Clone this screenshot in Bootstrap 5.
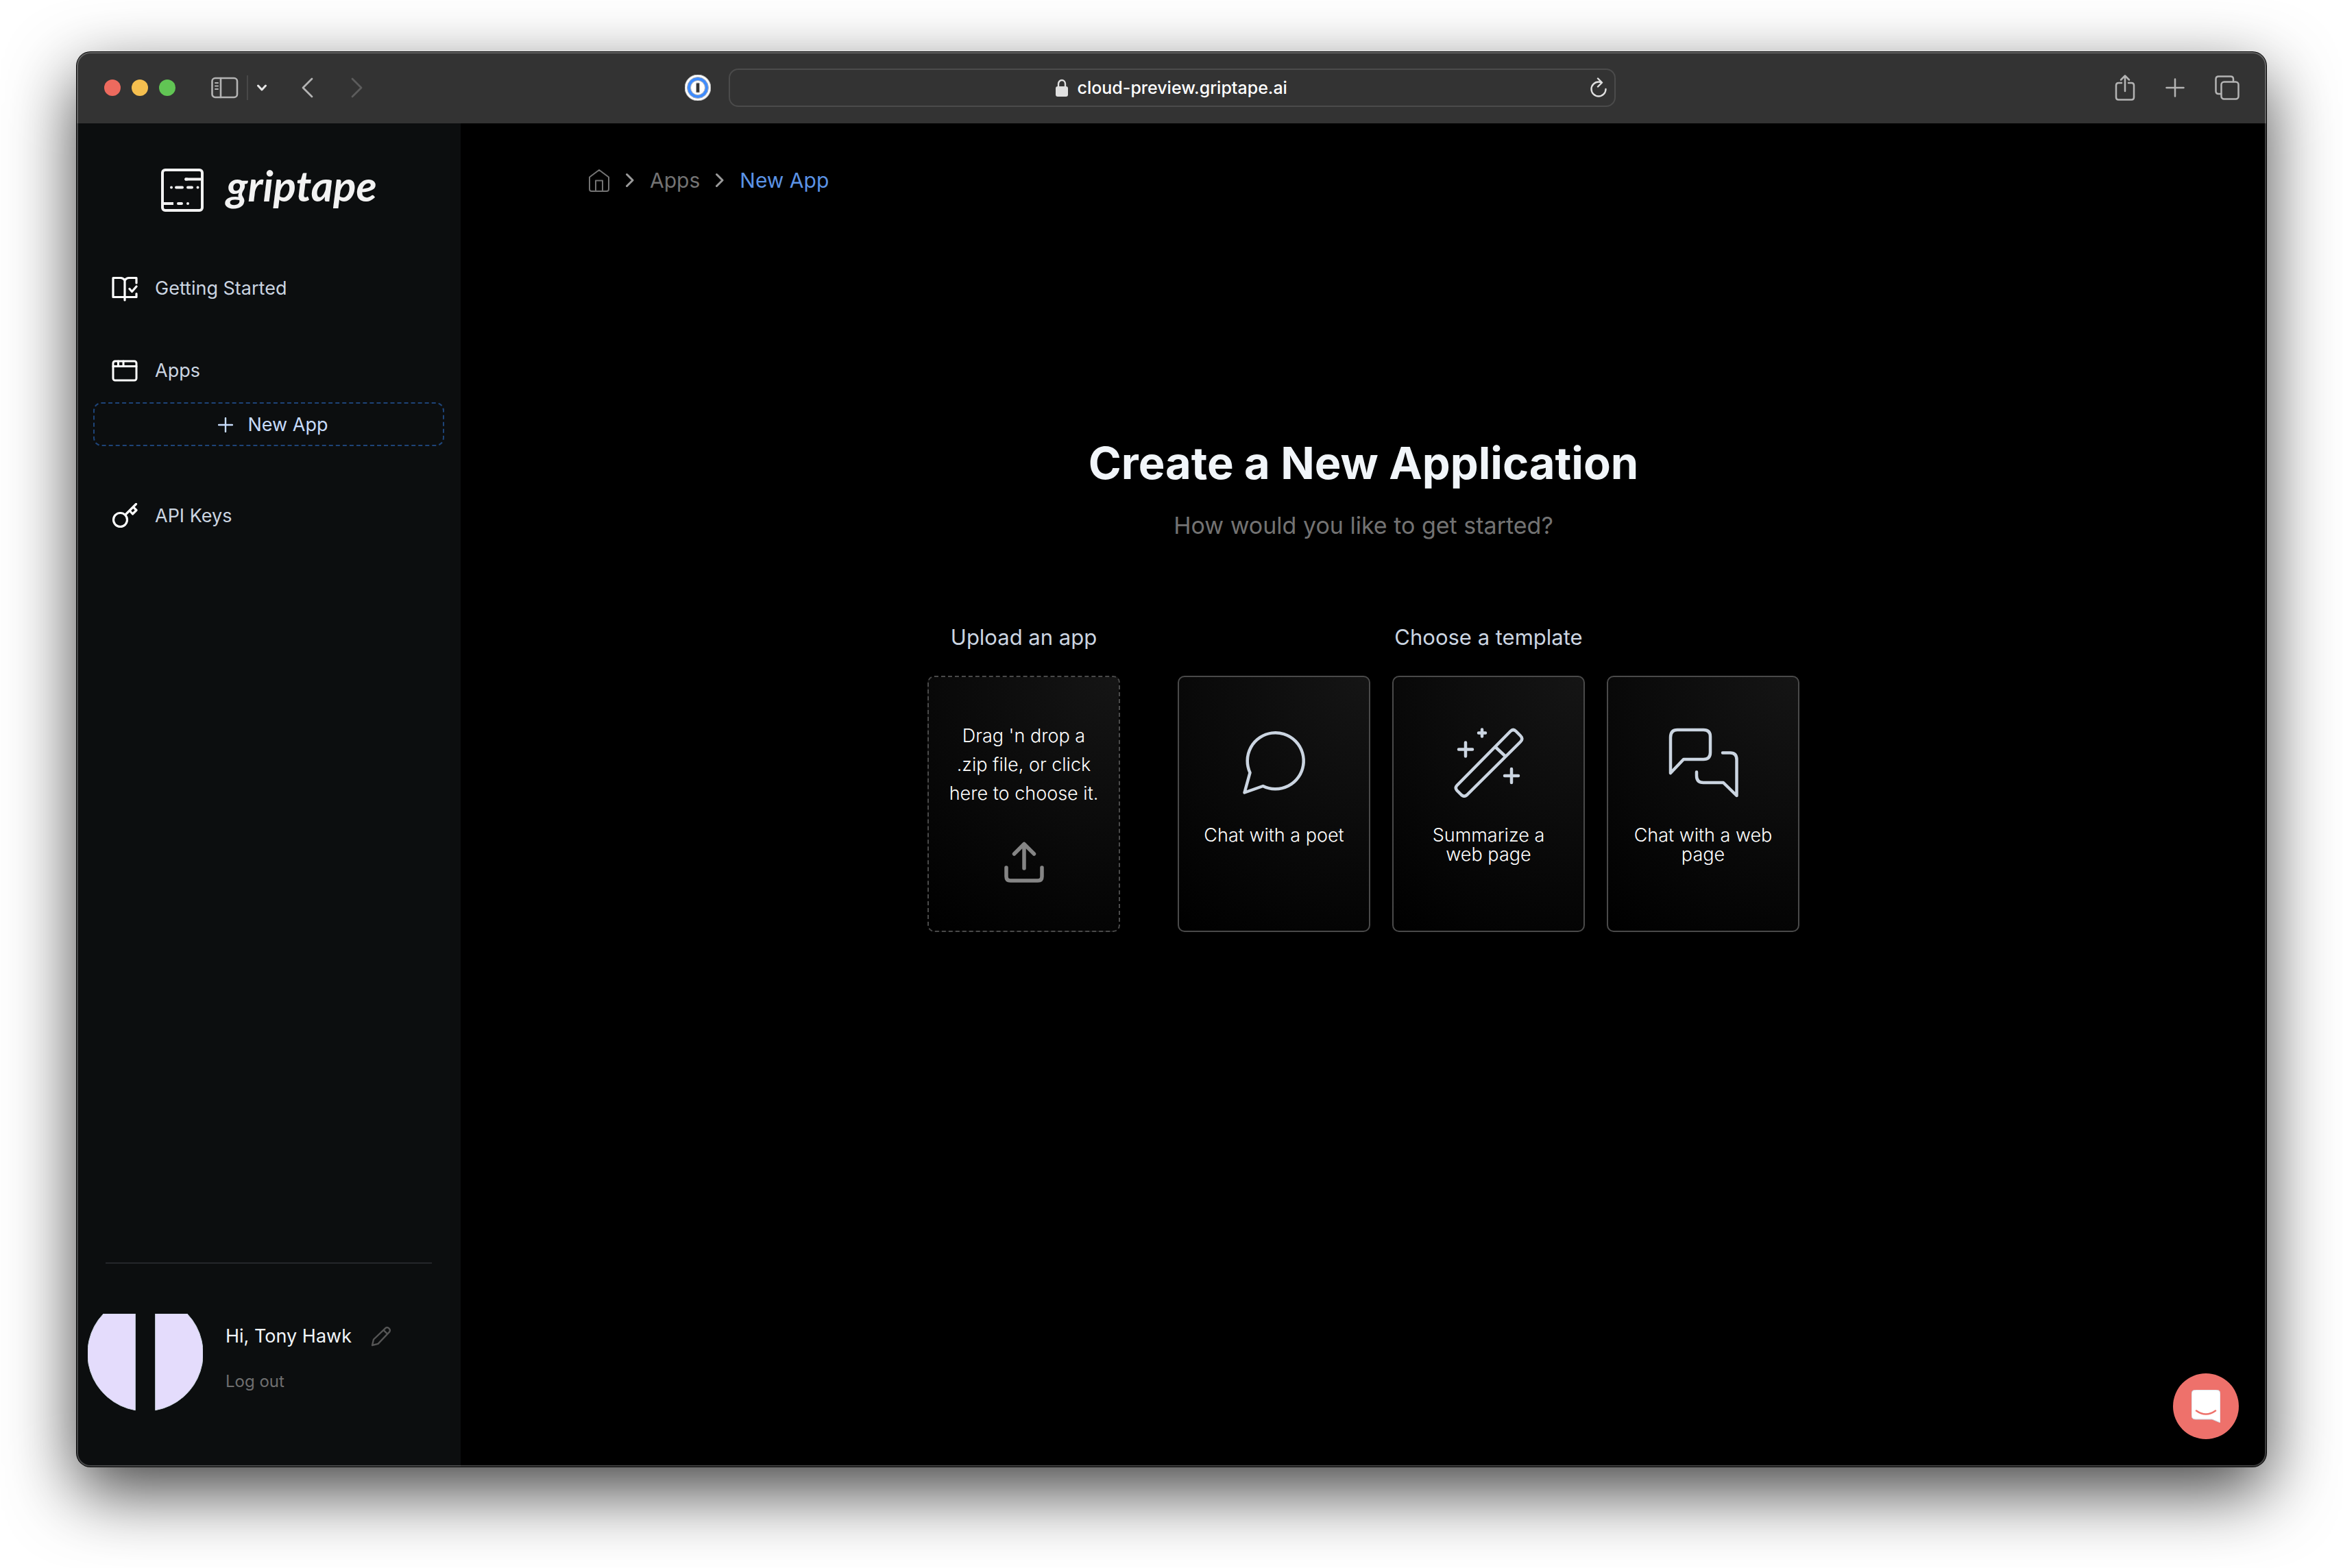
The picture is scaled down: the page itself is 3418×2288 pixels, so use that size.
<!DOCTYPE html>
<html lang="en">
<head>
<meta charset="utf-8">
<meta name="viewport" content="width=device-width, initial-scale=1">
<title>Create a New Application</title>
<link href="https://cdn.jsdelivr.net/npm/bootstrap@5.3.0/dist/css/bootstrap.min.css" rel="stylesheet">
<style>
body{background:#fff;font-family:Inter,"Liberation Sans",sans-serif;font-size:27px;line-height:40px;color:#cbd5e1;padding:76px 112px 148px}
svg{display:block;flex:none;fill:none;stroke:currentColor;stroke-linecap:round;stroke-linejoin:round}
a{color:inherit;text-decoration:none}
button{background:none;border:0;padding:0;color:inherit}
.browser{min-height:calc(100vh - 224px);border-radius:20px;background:#000;box-shadow:0 0 0 1px #000,0 36px 100px rgba(0,0,0,.74)}
.browser::after{content:"";position:absolute;inset:0;border-radius:20px;box-shadow:inset 0 0 0 2px rgba(255,255,255,.24);pointer-events:none}
.toolbar{height:104px;background:#333;border-radius:20px 20px 0 0;color:#b4b4b4;padding:0 39px 0 40px}
.side-group{flex:1 1 0;min-width:0}
.lights{gap:16px}
.light{width:24px;height:24px;border-radius:50%}
.light-close{background:#ed6a5e}
.light-min{background:#f5bf4f}
.light-max{background:#61c554}
.tools{gap:44px}
.vault{margin-right:26px}
.address{flex:0 1 1294px;height:56px;border:2px solid #4b4b4b;border-radius:14px;padding:0 11px;color:#e0e0e0}
.address input{width:308px;background:none;border:0;padding:0;color:#fff;font-size:25px;font-weight:500;line-height:40px;outline:0}
.address label{margin-right:14px}
.split{width:2px;height:36px;margin-left:12px;background:#484848}
.sidebar{flex:0 0 560px;background:#0c0e0f;padding:61px 24px 81px;border-bottom-left-radius:20px}
.logo{gap:32px;height:72px;margin-bottom:76px}
.logo svg{margin-top:3px}
.brand{font-family:Lato,"Open Sans",sans-serif;font-style:italic;font-weight:700;font-size:62px;line-height:58px;color:#f2f2f2}
.side-link{height:64px;padding-left:27px;gap:25px}
.side-link svg{color:#fff}
.new-app{height:64px;border:2px dashed #1e4478;border-radius:12px;color:#c7dcfb;gap:22px;margin:14px 0 70px;padding:2px 0 0 12px}
.rule{height:2px;background:#25272a;margin:0 18px}
.profile{gap:33px;margin:73px 0 0 -8px}
.profile-text{padding-top:13px}
.content{padding:63px 186px}
.crumbs{font-size:30px;color:#737373;gap:22px}
.crumbs .here{color:#5b93e6}
.headline{font-size:65px;line-height:80px;font-weight:700;color:#f1f5f9;margin:353px 0 27px}
.sub{font-size:34px;line-height:48px;color:#737373;margin-bottom:119px}
.group-title{font-size:31px;line-height:40px;font-weight:400;margin-bottom:36px}
.groups{gap:84px}
.picks{gap:32px}
.tile{width:281px;height:374px;border:2px solid #4a4a4a;border-radius:10px;background:radial-gradient(circle at 100% 0,#151515 0,#000 100%);color:#fff;font-size:27px;font-weight:300;line-height:28px}
.tile svg{color:#cbd5e1}
.tile-drop{border-style:dashed;line-height:42px;padding:65px 20px 0;gap:49px;cursor:pointer}
.tile-drop svg{color:#858585}
.tile-pick{padding:74px 16px 0;gap:41px}
.fab{right:40px;bottom:40px;width:96px;height:96px;border-radius:50%;background:#ee716b}
.quiet{font-size:24px;color:#6f6f6f;margin-top:26px}
</style>
<script src="https://cdn.jsdelivr.net/npm/bootstrap@5.3.0/dist/js/bootstrap.bundle.min.js"></script>
</head>
<body>
<div class="browser position-relative d-flex flex-column">
  <header class="toolbar d-flex align-items-center">
    <div class="side-group d-flex align-items-center">
      <div class="lights d-flex">
        <span class="light light-close"></span>
        <span class="light light-min"></span>
        <span class="light light-max"></span>
      </div>
      <button class="ms-5 ps-1" aria-label="Sidebar"><svg width="40" height="32" viewBox="0 0 40 32" stroke-width="2.6"><rect x="1.5" y="2" width="36.5" height="28" rx="4.5"/><path d="M14 2v28"/><path stroke-width="2" d="M6 9h4M6 13.500h4M6 18h4"/></svg></button>
      <span class="split"></span>
      <button class="ms-2 ps-1" aria-label="Tab groups"><svg width="16" height="10" viewBox="0 0 16 10" stroke-width="3" style="color:#e6e6e6"><path d="M2.500 2 8 8l5.500-6"/></svg></button>
      <button class="ms-5" aria-label="Back"><svg width="20" height="32" viewBox="0 0 20 32" stroke-width="2.800"><path d="M17 3 4 16l13 13"/></svg></button>
      <button class="ms-5 ps-1" aria-label="Forward" disabled><svg width="20" height="32" viewBox="0 0 20 32" stroke-width="2.800" style="color:#5c5c5c"><path d="M4 3l13 13L4 29"/></svg></button>
      <button class="vault ms-auto" aria-label="Password manager"><svg width="38" height="38" viewBox="0 0 38 38" stroke="none"><circle cx="19" cy="19" r="19" fill="#fff"/><circle cx="19" cy="19" r="15.500" fill="#3f8cff"/><circle cx="19" cy="19" r="10.500" fill="#fff"/><rect x="16.500" y="12" width="5" height="14" rx="1" fill="#333"/></svg></button>
    </div>
    <div class="address d-flex align-items-center">
      <span class="side-group"></span>
      <label for="url" aria-label="Address"><svg width="18" height="26" viewBox="0 0 18 26"><rect x="0" y="11" width="18" height="15" rx="3" fill="currentColor" stroke="none"/><path stroke-width="2.400" d="M4 12V7.500a5 5.500 0 0 1 10 0V12"/></svg></label>
      <input id="url" type="text" value="cloud-preview.griptape.ai">
      <span class="side-group d-flex justify-content-end"><button aria-label="Reload"><svg width="24" height="30" viewBox="0 0 24 30" stroke-width="2.400"><path d="M22.500 17a10.500 10.500 0 1 1-10.500-10.500c1.500 0 3 .2 4.300.8M11 1.500l6 6-6 6"/></svg></button></span>
    </div>
    <div class="side-group tools d-flex align-items-center justify-content-end">
      <button aria-label="Share"><svg width="30" height="40" viewBox="0 0 30 40" stroke-width="2.500"><path d="M10 13H5.500Q2 13 2 16.500v17.500q0 3.500 3.500 3.500h19q3.500 0 3.500-3.500V16.500q0-3.500-3.500-3.500H20M15 25V2.500M9 8.500l6-6 6 6"/></svg></button>
      <button aria-label="New tab"><svg width="28" height="28" viewBox="0 0 28 28" stroke-width="2.500"><path d="M14 1.500v25M1.500 14h25"/></svg></button>
      <button aria-label="Tab overview"><svg width="36" height="36" viewBox="0 0 36 36" stroke-width="2.500"><rect x="9.500" y="9.500" width="25" height="25" rx="4"/><path d="M9 27H5.500Q1.500 27 1.500 23V5.500Q1.500 1.500 5.500 1.500H23q4 0 4 4V9"/></svg></button>
    </div>
  </header>

  <div class="d-flex flex-fill">
    <aside class="sidebar d-flex flex-column">
      <a href="#" class="logo d-flex align-items-start justify-content-center">
        <svg width="64" height="66" viewBox="0 0 64 66" stroke-width="4" style="color:#f2f2f2"><rect x="3" y="4" width="58" height="59" rx="4"/><path stroke-linecap="butt" d="M36 17.500h25M5 53h14"/><path d="M37 17.500h2M16 29.500h0M23 29.500h9M40 29.500h6M54.500 29.500h0M17 53h0M26 53h5M40 53h0"/></svg>
        <span class="brand">griptape</span>
      </a>
      <nav class="d-flex flex-column">
        <a href="#" class="side-link d-flex align-items-center mb-5"><svg width="38" height="38" viewBox="0 0 38 38" stroke-width="3.200"><path d="M19 7q-2.500-3.500-6-3.500H2v28h34v-5M36 11V3.500H25Q21.500 3.500 19 7v29M26 19.500l3.500 4L36 16"/></svg>Getting Started</a>
        <a href="#" class="side-link d-flex align-items-center mt-2"><svg width="38" height="38" viewBox="0 0 38 38" stroke-width="3"><rect x="2" y="5" width="34" height="28" rx="3"/><path d="M2 12.500h34M9.500 5v7.500M17 5v7.500"/></svg>Apps</a>
        <button class="new-app d-flex align-items-center justify-content-center"><svg width="22" height="22" viewBox="0 0 22 22" stroke-width="2.400" stroke-linecap="butt"><path d="M11 1v20M1 11h20"/></svg>New App</button>
        <a href="#" class="side-link d-flex align-items-center"><svg width="38" height="38" viewBox="0 2 38 38" stroke-width="3.200"><circle cx="12.500" cy="26.500" r="10"/><path d="M20 19 35.500 3.500M26 13l4.500 5L36 12.500 31.500 8"/></svg>API Keys</a>
      </nav>
      <div class="mt-auto">
        <div class="rule"></div>
        <div class="profile d-flex">
          <svg width="168" height="142" viewBox="0 26 168 142" stroke="none"><path fill="#e4dcfc" d="M69 26H23A84 84 0 0 0 69 166.700ZM99 26h46A84 84 0 0 1 99 166.700Z"/></svg>
          <div class="profile-text">
            <div class="d-flex align-items-center gap-4" style="color:#f1f5f9">Hi, Tony Hawk<button class="ms-1" aria-label="Edit profile"><svg width="30" height="30" viewBox="0 0 30 30" stroke-width="2.400" style="color:#555"><path d="M2 28l2-8.500L21.500 2.800q2.600-1.800 5 .5t.7 5L10.500 25.800ZM18.500 5.800l5.700 5.700"/></svg></button></div>
            <a href="#" class="quiet d-inline-block">Log out</a>
          </div>
        </div>
      </div>
    </aside>

    <main class="content flex-fill">
      <nav class="crumbs d-flex align-items-center" aria-label="Breadcrumb">
        <a href="#" aria-label="Home"><svg width="32" height="34" viewBox="0 0 32 34" stroke-width="2"><path d="M2 12.500 16 2l14 10.500V30q0 3-3 3H5q-3 0-3-3ZM11 33V17.500h10V33"/></svg></a>
        <svg width="14" height="22" viewBox="0 0 14 22" stroke-width="3" style="color:#9a9a9a"><path d="M2.500 2.500 11 11l-8.500 8.500"/></svg>
        <a href="#">Apps</a>
        <svg width="14" height="22" viewBox="0 0 14 22" stroke-width="3" style="color:#9a9a9a"><path d="M2.500 2.500 11 11l-8.500 8.500"/></svg>
        <a href="#" class="here" aria-current="page">New App</a>
      </nav>
      <h1 class="headline text-center">Create a New Application</h1>
      <p class="sub text-center">How would you like to get started?</p>
      <div class="groups d-flex justify-content-center">
        <section>
          <h2 class="group-title text-center">Upload an app</h2>
          <label class="tile tile-drop d-flex flex-column align-items-center text-center">
            <input type="file" class="visually-hidden" accept=".zip">
            <span>Drag 'n drop a<br>.zip file, or click<br>here to choose it.</span>
            <svg width="58" height="60" viewBox="0 0 58 60" stroke-width="5.500"><path d="M3 38v13q0 6 6 6h40q6 0 6-6V38M29 39V4M14.500 18 29 3.500 43.500 18"/></svg>
          </label>
        </section>
        <section>
          <h2 class="group-title text-center">Choose a template</h2>
          <div class="picks d-flex">
            <button class="tile tile-pick d-flex flex-column align-items-center"><svg width="102" height="102" viewBox="0 0 102 102" stroke-width="4.500"><path d="M15.500 65.500A41 41 0 1 1 34.500 85L7.500 94.500Z"/></svg>Chat with a poet</button>
            <button class="tile tile-pick d-flex flex-column align-items-center"><svg width="102" height="102" viewBox="0 0 102 102" stroke-width="4.500"><path d="M4.500 84 82.500 5q4-4 8 0l6.500 6.500q4.500 4.500 0 9L19 98q-4 3.500-8 0l-6.500-6.500q-3.500-4 0-7.500ZM60.500 28 75 41.500M17 21.500v20M7 31.500h20M41 2.500v10M36 7.500h10M84 60v20M74 70h20"/></svg><span>Summarize a<br>web page</span></button>
            <button class="tile tile-pick d-flex flex-column align-items-center"><svg width="102" height="102" viewBox="0 0 102 102" stroke-width="4.500"><path d="M3 66V14Q3 3 13 3h38q10 0 10 10v23q0 10-10 10H22ZM79 36.500h11q9.500 0 9.500 10V99L80 80H51q-10 0-10-10v-5.500"/></svg><span>Chat with a web<br>page</span></button>
          </div>
        </section>
      </div>
    </main>
  </div>
  <button class="fab position-absolute d-flex align-items-center justify-content-center" aria-label="Open chat"><svg width="42" height="48" viewBox="0 0 42 48" stroke="none"><path fill="#fff" d="M6 0h30q6 0 6 6v42l-12-5H6q-6 0-6-6V6q0-6 6-6Z"/><path d="M7 30.500q14 10 28 0" stroke="#ee716b" stroke-width="2.600"/></svg></button>
</div>
</body>
</html>
